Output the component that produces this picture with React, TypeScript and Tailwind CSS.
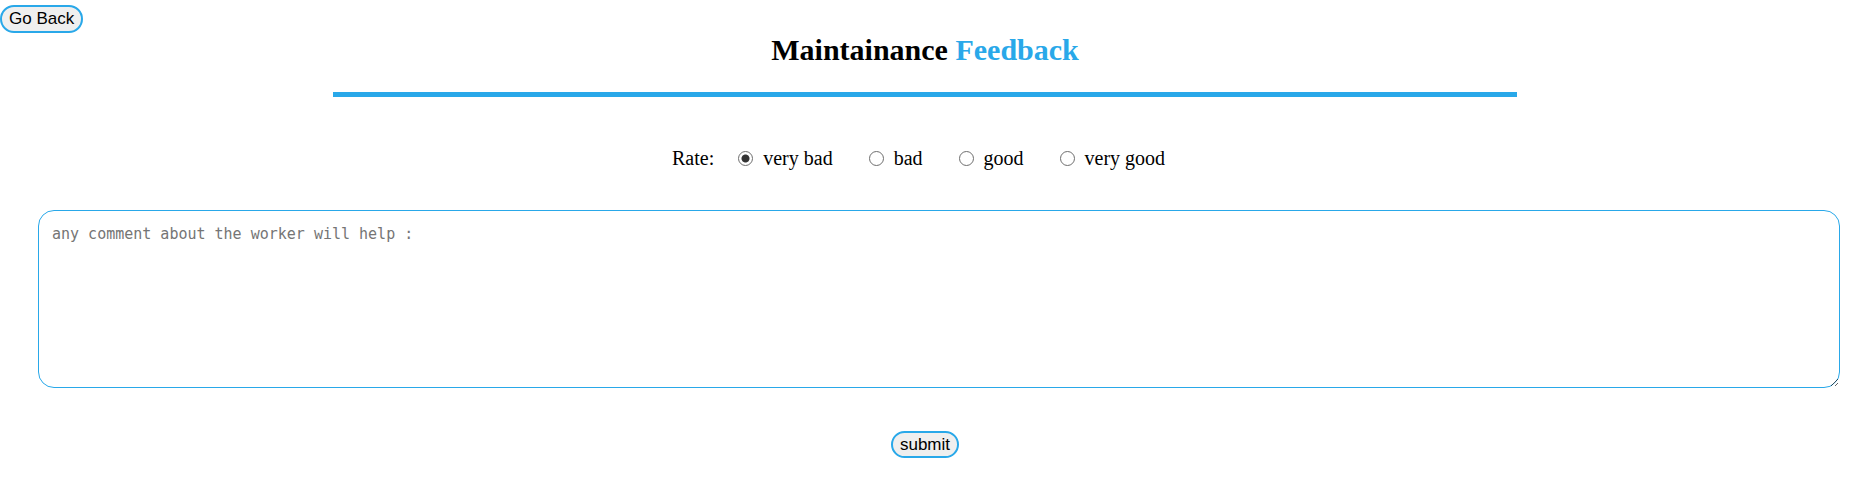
import React from "react";

export default function App() {
  const options = ["very bad", "bad", "good", "very good"];
  return (
    <div className="w-[1860px] h-[502px] bg-white text-black" style={{ fontFamily: '"Liberation Serif", serif' }}>
      <button
        className="block mt-[5px] h-[28px] px-[7px] rounded-full border-2 border-[#29a8e9] bg-[#efefef] text-[17px] leading-[20px] text-black"
        style={{ fontFamily: '"Liberation Sans", Arial, sans-serif' }}
      >
        Go Back
      </button>
      <div className="ml-[333px] w-[1184px]">
        <h1 className="text-center text-[30px] leading-[33px] font-bold">
          Maintainance <span className="text-[#29a8e9]">Feedback</span>
        </h1>
        <div className="mt-[26px] h-[5px] bg-[#29a8e9]" />
      </div>
      <div className="mt-[50px] ml-[672px] flex items-center text-[20px] leading-[23px] h-[23px]">
        <span className="mr-[24px]">Rate:</span>
        {options.map((o, i) => (
          <label key={o} className="flex items-center mr-[36px]">
            <input
              type="radio"
              name="rate"
              defaultChecked={i === 0}
              className="appearance-none m-0 w-[15px] h-[15px] mr-[10px] rounded-full border border-[#6e6e6e] bg-white checked:bg-[radial-gradient(circle,#333333_0,#333333_3.5px,#ffffff_4.5px)]"
            />
            <span>{o}</span>
          </label>
        ))}
      </div>
      <div className="mt-[40px] ml-[38px] w-[1802px]">
        <textarea
          placeholder="any comment about the worker will help :"
          className="block w-full h-[178px] rounded-[16px] border border-[#29a8e9] outline-none px-[13px] py-[12px] text-[15px] placeholder:text-[#757575]"
          style={{ fontFamily: '"DejaVu Sans Mono", monospace' }}
        />
      </div>
      <div className="ml-[333px] w-[1184px] flex justify-center mt-[43px]">
        <button
          className="h-[27px] px-[7px] rounded-full border-2 border-[#29a8e9] bg-[#efefef] text-[17px] leading-[20px] text-black"
          style={{ fontFamily: '"Liberation Sans", Arial, sans-serif' }}
        >
          submit
        </button>
      </div>
    </div>
  );
}
